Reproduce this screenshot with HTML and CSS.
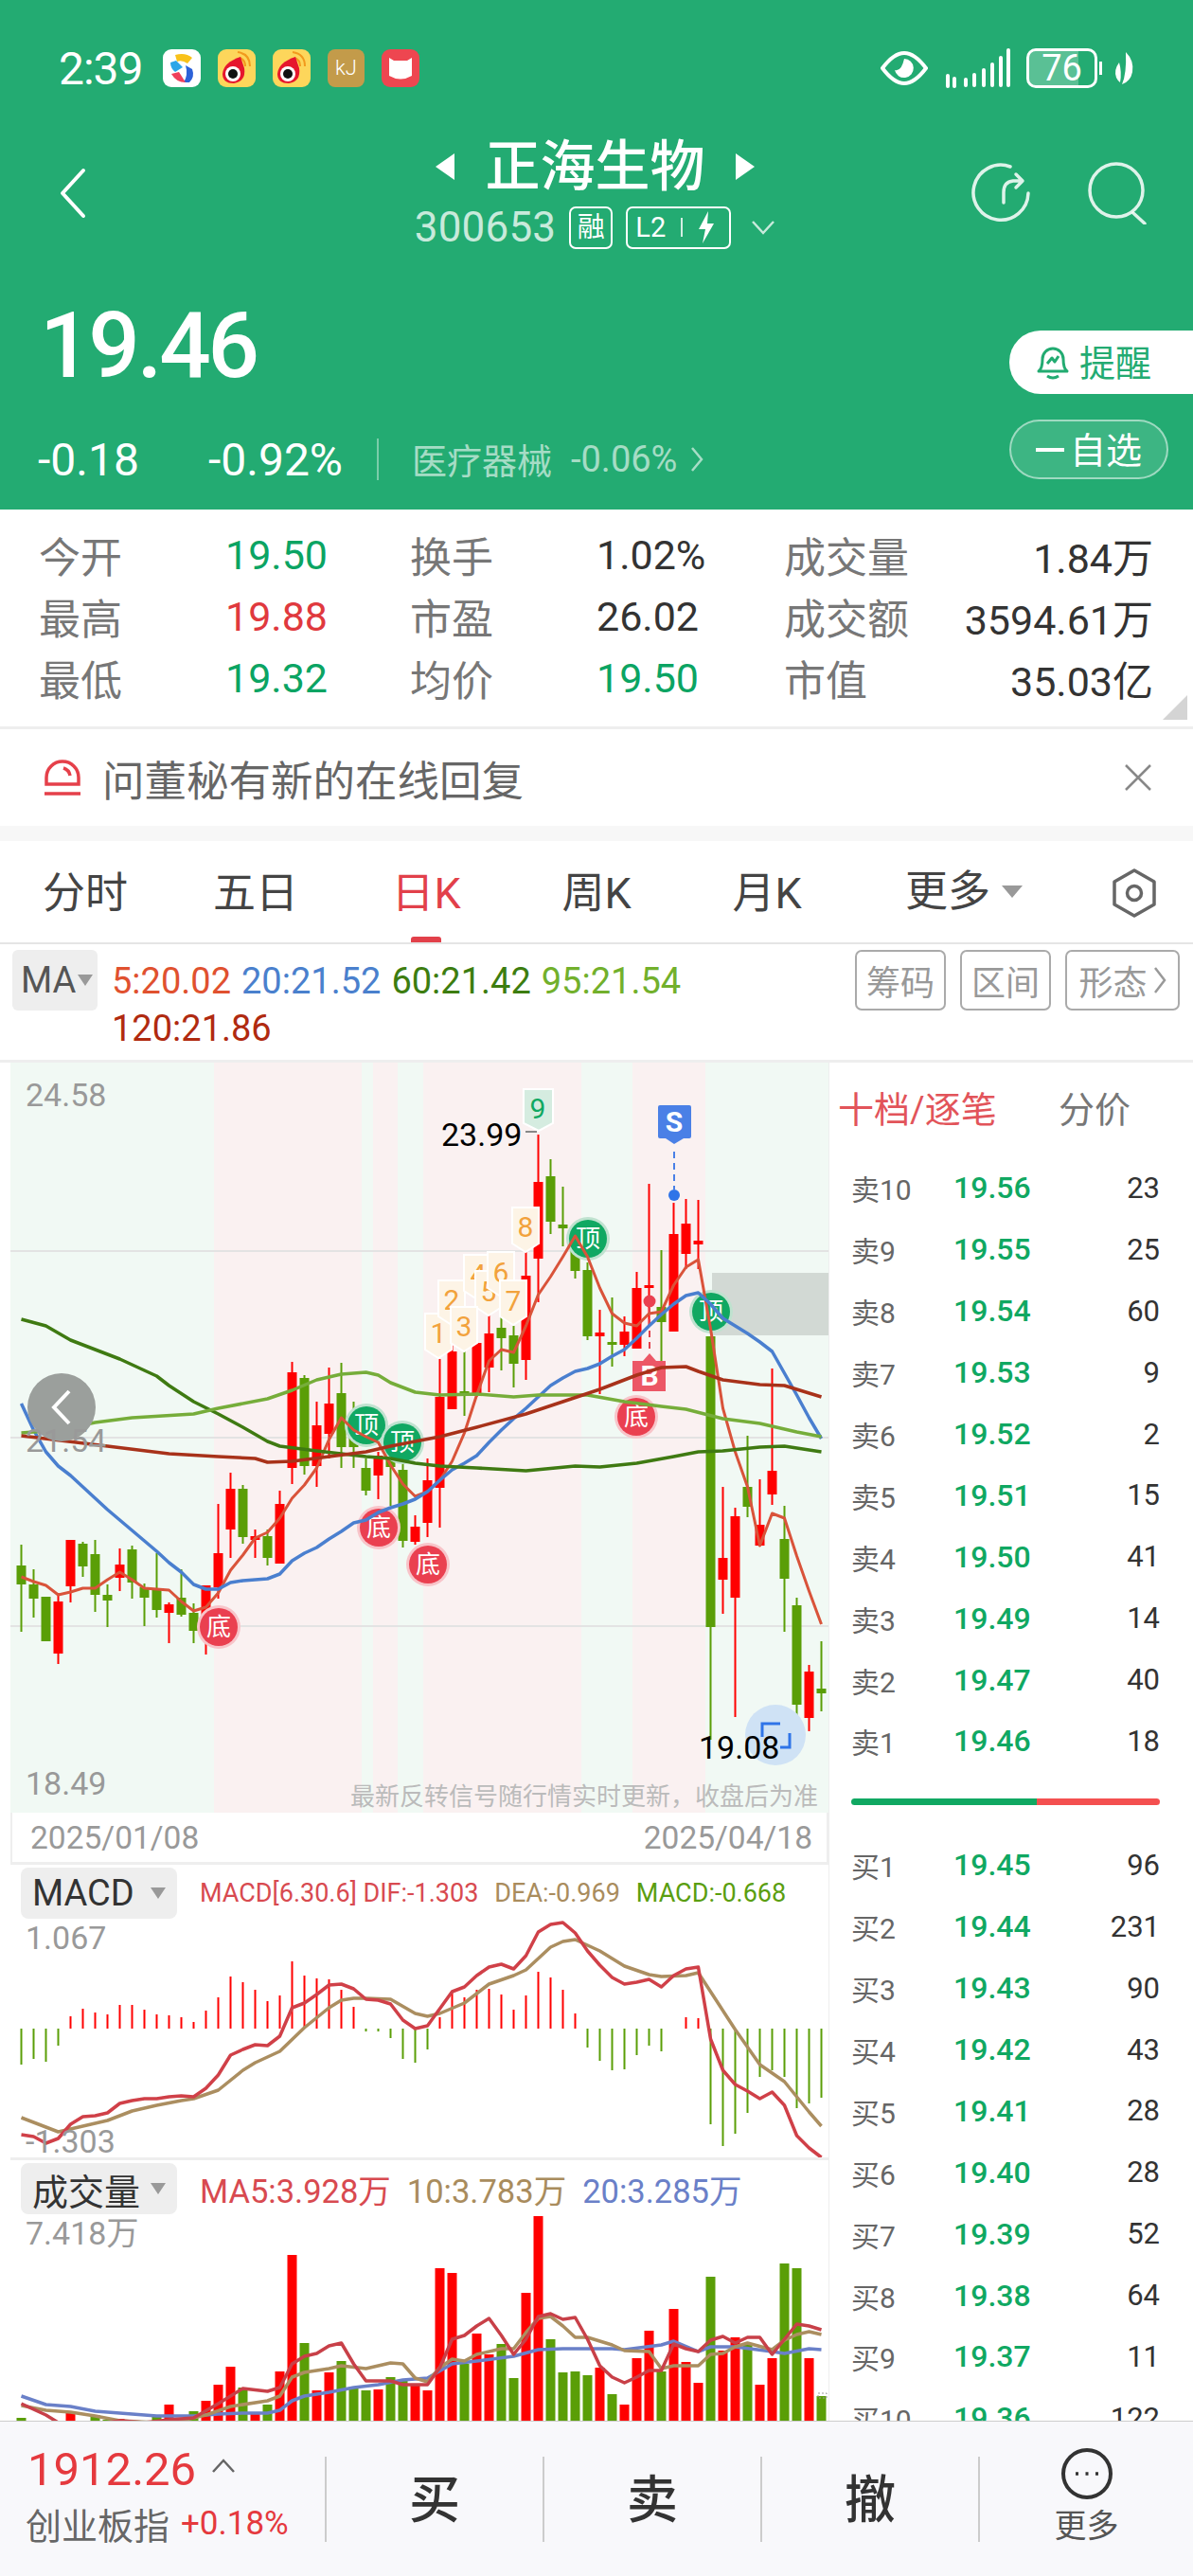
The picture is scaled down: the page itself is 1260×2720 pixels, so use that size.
FILE: index.html
```html
<!DOCTYPE html>
<html lang="zh-CN">

<head>
    <meta charset="UTF-8">
    <meta name="viewport" content="width=device-width, initial-scale=1.0">
    <title>正海生物</title>
    <link rel="stylesheet" href="styles.css">
</head>

<body>
    <div class="page">
        <header class="top">
            <div class="status">
                <div class="status-left">
                    <span class="clock">2:39</span>
                    <svg class="app-icon" viewBox="0 0 40 40">
                        <rect width="40" height="40" rx="9" fill="#fff" />
                        <path d="M13 6 Q24 3 31 9 L26 15 Q20 11 15 13 Z" fill="#f9c21a" />
                        <path d="M8 14 L14 12 L21 19 L13 24 Q8 20 8 14 Z" fill="#2aa6e8" />
                        <path d="M24 17 L31 21 Q34 29 28 35 L22 35 Q27 27 24 17 Z" fill="#2c62d8" />
                        <path d="M9 26 L17 24 L24 35 Q14 35 9 26 Z" fill="#ef3f5a" />
                    </svg>
                    <svg class="app-icon" viewBox="0 0 40 40">
                        <use href="#weibo" />
                    </svg>
                    <svg class="app-icon" viewBox="0 0 40 40">
                        <use href="#weibo" />
                    </svg>
                    <span class="app-kj">kJ</span>
                    <svg class="app-icon" viewBox="0 0 40 40">
                        <rect width="40" height="40" rx="9" fill="#ee4650" />
                        <path d="M8 9 L13 12 H27 L32 9 V28 Q20 35 8 28 Z" fill="#fff" />
                    </svg>
                </div>
                <div class="status-right">
                    <svg class="eye" width="50" height="36" viewBox="0 0 50 36" fill="none" stroke="#fff" stroke-width="4">
                        <path d="M2 18 Q14 2 25 2 Q36 2 48 18 Q36 34 25 34 Q14 34 2 18 Z" />
                        <path d="M25 8 A10 10 0 1 1 15 20 Q22 22 25 8 Z" fill="#fff" stroke="none" />
                    </svg>
                    <svg width="70" height="42" viewBox="0 0 70 42" fill="none" stroke="#fff" stroke-width="4" stroke-linecap="round">
                        <path d="M3 29 V40 M10 32 L10 40 M22 33 V39 M31 28 V39 M41 23 V39 M50 17 V39 M59 10 V39 M67 2 V39" />
                    </svg>
                    <div class="battery"><span class="battery-level"></span><span class="battery-num">76</span></div>
                    <span class="battery-nib"></span>
                    <svg width="24" height="36" viewBox="0 0 24 36">
                        <path d="M15 1 Q24 10 22 22 Q20 32 11 35 Q16 24 15 1 Z M8 12 Q2 20 5 28 Q7 32 9 33 Q11 22 8 12 Z" fill="#fff" />
                    </svg>
                </div>
            </div>

            <div class="nav">
                <svg class="back" width="30" height="54" viewBox="0 0 30 54" fill="none" stroke="#fff" stroke-width="4" stroke-linecap="round" stroke-linejoin="round">
                    <path d="M26 3 L4 27 L26 51" />
                </svg>
                <div class="nav-center">
                    <div class="title-row">
                        <span class="tri-left"></span>
                        <span class="title">正海生物</span>
                        <span class="tri-right"></span>
                    </div>
                    <div class="code-row">
                        <span class="code">300653</span>
                        <span class="badge">融</span>
                        <span class="badge badge-level">L2<i class="badge-line"></i>
                            <svg width="20" height="34" viewBox="0 0 20 34">
                                <path d="M12 0 L2 19 H9 L6 34 L18 13 H11 Z" fill="#fff" />
                            </svg>
                        </span>
                        <svg class="code-more" width="26" height="16" viewBox="0 0 26 16" fill="none" stroke="#fff" stroke-opacity=".75" stroke-width="2.5">
                            <path d="M2 2 L13 14 L24 2" />
                        </svg>
                    </div>
                </div>
                <div class="nav-actions">
                    <svg width="64" height="66" viewBox="0 0 64 66" fill="none" stroke="#fff" stroke-opacity=".85" stroke-width="3.5" stroke-linecap="round" stroke-linejoin="round">
                        <path d="M41 5 A29 29 0 1 0 60 33" />
                        <path d="M34 43 V32 Q34 21 44 20 H54 M47 13 L54 20 L47 27" />
                    </svg>
                    <svg width="64" height="66" viewBox="0 0 64 66" fill="none" stroke="#fff" stroke-opacity=".85" stroke-width="3.5" stroke-linecap="round">
                        <circle cx="31" cy="30" r="28" />
                        <path d="M49 54 L61 65" />
                    </svg>
                </div>
            </div>

            <div class="quote">
                <div>
                    <div class="price">19.46</div>
                    <div class="change-row">
                        <span class="change">-0.18</span>
                        <span class="change change-pct">-0.92%</span>
                        <span class="change-line"></span>
                        <span class="sector">医疗器械</span>
                        <span class="sector-pct">-0.06%</span>
                        <svg width="14" height="28" viewBox="0 0 14 28" fill="none" stroke="#fff" stroke-opacity=".6" stroke-width="2.5">
                            <path d="M2 2 L12 14 L2 26" />
                        </svg>
                    </div>
                </div>
                <div class="quote-buttons">
                    <div class="btn-remind">
                        <svg width="36" height="36" viewBox="0 0 36 36" fill="none" stroke="#22ab71" stroke-width="3" stroke-linejoin="round">
                            <path d="M3 27 Q7 24 7 14 A11 11 0 0 1 29 14 Q29 24 33 27 Z" />
                            <path d="M12 32 Q18 36 24 32 M12 19 L17 13 L20 17 L24 11" />
                        </svg>
                        <span class="btn-text">提醒</span>
                    </div>
                    <div class="btn-watch"><span class="btn-dash"></span><span class="btn-text">自选</span></div>
                </div>
            </div>
        </header>

        <section class="stats">
            <span class="stat-label">今开</span><span class="fall">19.50</span>
            <span class="stat-label">换手</span><span class="stat-value">1.02%</span>
            <span class="stat-label">成交量</span><span class="stat-value stat-end">1.84万</span>
            <span class="stat-label">最高</span><span class="rise">19.88</span>
            <span class="stat-label">市盈</span><span class="stat-value">26.02</span>
            <span class="stat-label">成交额</span><span class="stat-value stat-end">3594.61万</span>
            <span class="stat-label">最低</span><span class="fall">19.32</span>
            <span class="stat-label">均价</span><span class="fall">19.50</span>
            <span class="stat-label">市值</span><span class="stat-value stat-end">35.03亿</span>
            <span class="stats-corner"></span>
        </section>

        <section class="notice">
            <svg width="40" height="40" viewBox="0 0 40 40" fill="none" stroke="#e5404a" stroke-width="3.5">
                <path d="M3 27 V20 A17 17 0 0 1 37 20 V27 Z" />
                <path d="M1 37 H39 M21 10 A10 10 0 0 1 28 18" />
            </svg>
            <span class="notice-text">问董秘有新的在线回复</span>
            <svg width="30" height="30" viewBox="0 0 30 30" fill="none" stroke="#888" stroke-width="2.5">
                <path d="M2 2 L28 28 M28 2 L2 28" />
            </svg>
        </section>

        <nav class="tabs">
            <span class="tab">分时</span>
            <span class="tab">五日</span>
            <span class="tab tab-on">日K</span>
            <span class="tab">周K</span>
            <span class="tab">月K</span>
            <span class="tab tab-more">更多<i class="tri-down"></i></span>
            <svg class="tab-gear" width="48" height="52" viewBox="0 0 48 52" fill="none" stroke="#666" stroke-width="3.5" stroke-linejoin="round">
                <path d="M24 2 L45 14 V38 L24 50 L3 38 V14 Z" />
                <circle cx="24" cy="26" r="7.5" />
            </svg>
        </nav>

        <section class="ma-row">
            <div class="ma-btn">MA<i class="tri-down tri-small"></i></div>
            <div class="ma-legend">
                <span class="ma5">5:20.02</span>
                <span class="ma20">20:21.52</span>
                <span class="ma60">60:21.42</span>
                <span class="ma95">95:21.54</span>
                <span class="ma120">120:21.86</span>
            </div>
            <div class="ma-tools">
                <span class="tool">筹码</span>
                <span class="tool">区间</span>
                <span class="tool tool-wide">形态
                    <svg width="14" height="30" viewBox="0 0 14 30" fill="none" stroke="#999" stroke-width="2.5">
                        <path d="M2 2 L12 15 L2 28" />
                    </svg>
                </span>
            </div>
        </section>

        <main class="workspace">
            <div class="charts">
                <svg class="kline" width="864" height="792" viewBox="11 1122 864 792">
                    <rect x="11" y="1122" width="864" height="792" fill="#f1f9f4" />
                    <rect class="band" x="226" y="1122" width="156" height="792" />
                    <rect class="band" x="394" y="1122" width="26" height="792" />
                    <rect class="band" x="447" y="1122" width="167" height="792" />
                    <rect class="band" x="668" y="1122" width="77" height="792" />
                    <path class="grid-line" d="M11 1321 H875 M11 1518 H875 M11 1717 H875" />
                    <rect x="752" y="1344" width="123" height="66" fill="#d2d9d4" />

                    <g id="candles"></g>

                    <g class="pin pin-orange">
                        <path d="M449 1387 h28 v38 l-14 9 l-14 -9 z" /><text x="463" y="1418">1</text>
                        <path d="M463 1352 h28 v38 l-14 9 l-14 -9 z" /><text x="477" y="1383">2</text>
                        <path d="M490 1325 h28 v38 l-14 9 l-14 -9 z" /><text x="505" y="1356">4</text>
                        <path d="M502 1342 h28 v38 l-14 9 l-14 -9 z" /><text x="516" y="1374">5</text>
                        <path d="M515 1322 h28 v38 l-14 9 l-14 -9 z" /><text x="529" y="1354">6</text>
                        <path d="M528 1352 h28 v38 l-14 9 l-14 -9 z" /><text x="542" y="1384">7</text>
                        <path d="M476 1380 h28 v38 l-14 9 l-14 -9 z" /><text x="490" y="1411">3</text>
                        <path d="M541 1275 h28 v38 l-14 9 l-14 -9 z" /><text x="555" y="1306">8</text>
                    </g>
                    <g class="pin pin-green">
                        <path d="M553 1150 h31 v36 l-15 8 l-16 -8 z" /><text x="568" y="1181">9</text>
                    </g>

                    <path class="tick" d="M555 1195 H567 M830 1841 H841" />

                    <rect x="695" y="1167" width="35" height="35" rx="2" fill="#4a80e6" />
                    <path d="M703 1202 H722 L712 1208 Z" fill="#4a80e6" />
                    <text class="flag-text" x="712" y="1195">S</text>
                    <path class="dash-blue" d="M712 1216 V1256" />
                    <circle cx="712" cy="1262" r="6" fill="#2f74e8" />

                    <circle cx="686" cy="1374" r="6.5" fill="#ea4050" />
                    <path class="dash-red" d="M686 1381 V1425" />
                    <path d="M668 1469 V1437 H679 L686 1429 L693 1437 H703 V1469 Z" fill="#ec5766" />
                    <text class="flag-text" x="686" y="1463">B</text>

                    <g class="sign sign-top">
                        <circle cx="387" cy="1505" r="23" /><circle cx="387" cy="1505" r="20" /><text x="387" y="1514">顶</text>
                        <circle cx="425" cy="1523" r="23" /><circle cx="425" cy="1523" r="20" /><text x="425" y="1532">顶</text>
                        <circle cx="621" cy="1308" r="23" /><circle cx="621" cy="1308" r="20" /><text x="621" y="1317">顶</text>
                        <circle cx="751" cy="1385" r="23" /><circle cx="751" cy="1385" r="20" /><text x="751" y="1394">顶</text>
                    </g>
                    <g class="sign sign-bottom">
                        <circle cx="672" cy="1496" r="23" /><circle cx="672" cy="1496" r="20" /><text x="672" y="1505">底</text>
                        <circle cx="231" cy="1718" r="23" /><circle cx="231" cy="1718" r="20" /><text x="231" y="1727">底</text>
                        <circle cx="400" cy="1613" r="23" /><circle cx="400" cy="1613" r="20" /><text x="400" y="1622">底</text>
                        <circle cx="452" cy="1652" r="23" /><circle cx="452" cy="1652" r="20" /><text x="452" y="1661">底</text>
                    </g>

                    <g id="kline-lines"></g>

                    <circle cx="819" cy="1832" r="32" fill="#cfe2f5" />
                    <path d="M805 1834 V1820 H824 M824 1845 H834 V1830" fill="none" stroke="#2f74e8" stroke-width="3" />

                    <circle cx="65" cy="1486" r="36" fill="#9b9f9c" />
                    <path d="M73 1469 L57 1486 L73 1503" fill="none" stroke="#fff" stroke-width="4" />

                    <text class="axis" x="27" y="1168">24.58</text>
                    <text class="axis" x="27" y="1533">21.54</text>
                    <text class="axis" x="27" y="1895">18.49</text>
                    <text class="hilo" x="466" y="1210">23.99</text>
                    <text class="hilo" x="738" y="1857">19.08</text>
                    <text class="watermark" x="864" y="1906">最新反转信号随行情实时更新，收盘后为准</text>
                </svg>

                <div class="dates"><span>2025/01/08</span><span>2025/04/18</span></div>

                <div class="panel panel-macd">
                    <svg width="864" height="312" viewBox="11 1966 864 312">
                        <g id="macd-plot"></g>
                        <text class="axis" x="27" y="2055">1.067</text>
                        <text class="axis" x="27" y="2270">-1.303</text>
                    </svg>
                    <div class="panel-head">
                        <div class="panel-btn">MACD<i class="tri-down tri-small"></i></div>
                        <span class="lg-red lg-macd">MACD[6.30.6] DIF:-1.303</span>
                        <span class="lg-tan lg-macd">DEA:-0.969</span>
                        <span class="lg-green lg-macd">MACD:-0.668</span>
                    </div>
                </div>

                <div class="panel panel-vol">
                    <svg width="864" height="278" viewBox="11 2278 864 278">
                        <g id="vol-plot"></g>
                        <rect class="vol-mark" x="864" y="2524" width="9" height="5" />
                        <text class="axis" x="27" y="2367">7.418万</text>
                    </svg>
                    <div class="panel-head">
                        <div class="panel-btn">成交量<i class="tri-down tri-small"></i></div>
                        <span class="lg-red">MA5:3.928万</span>
                        <span class="lg-tan">10:3.783万</span>
                        <span class="lg-blue">20:3.285万</span>
                    </div>
                </div>
            </div>

            <aside class="book">
                <div class="book-head"><span class="book-title">十档/逐笔</span><span class="book-sub">分价</span></div>
                <div class="book-row"><span class="side">卖10</span><span class="bid">19.56</span><span class="qty">23</span></div>
                <div class="book-row"><span class="side">卖9</span><span class="bid">19.55</span><span class="qty">25</span></div>
                <div class="book-row"><span class="side">卖8</span><span class="bid">19.54</span><span class="qty">60</span></div>
                <div class="book-row"><span class="side">卖7</span><span class="bid">19.53</span><span class="qty">9</span></div>
                <div class="book-row"><span class="side">卖6</span><span class="bid">19.52</span><span class="qty">2</span></div>
                <div class="book-row"><span class="side">卖5</span><span class="bid">19.51</span><span class="qty">15</span></div>
                <div class="book-row"><span class="side">卖4</span><span class="bid">19.50</span><span class="qty">41</span></div>
                <div class="book-row"><span class="side">卖3</span><span class="bid">19.49</span><span class="qty">14</span></div>
                <div class="book-row"><span class="side">卖2</span><span class="bid">19.47</span><span class="qty">40</span></div>
                <div class="book-row"><span class="side">卖1</span><span class="bid">19.46</span><span class="qty">18</span></div>
                <div class="book-bar"><span class="bar-buy"></span><span class="bar-sell"></span></div>
                <div class="book-row"><span class="side">买1</span><span class="bid">19.45</span><span class="qty">96</span></div>
                <div class="book-row"><span class="side">买2</span><span class="bid">19.44</span><span class="qty">231</span></div>
                <div class="book-row"><span class="side">买3</span><span class="bid">19.43</span><span class="qty">90</span></div>
                <div class="book-row"><span class="side">买4</span><span class="bid">19.42</span><span class="qty">43</span></div>
                <div class="book-row"><span class="side">买5</span><span class="bid">19.41</span><span class="qty">28</span></div>
                <div class="book-row"><span class="side">买6</span><span class="bid">19.40</span><span class="qty">28</span></div>
                <div class="book-row"><span class="side">买7</span><span class="bid">19.39</span><span class="qty">52</span></div>
                <div class="book-row"><span class="side">买8</span><span class="bid">19.38</span><span class="qty">64</span></div>
                <div class="book-row"><span class="side">买9</span><span class="bid">19.37</span><span class="qty">11</span></div>
                <div class="book-row"><span class="side">买10</span><span class="bid">19.36</span><span class="qty">122</span></div>
            </aside>
        </main>

        <footer class="bottom">
            <div class="index">
                <div class="index-top">
                    <span class="index-num">1912.26</span>
                    <svg width="26" height="16" viewBox="0 0 26 16" fill="none" stroke="#666" stroke-width="2.5">
                        <path d="M2 14 L13 2 L24 14" />
                    </svg>
                </div>
                <div class="index-sub"><span class="index-name">创业板指</span><span class="index-pct">+0.18%</span></div>
            </div>
            <div class="action">买</div>
            <div class="action">卖</div>
            <div class="action">撤</div>
            <div class="action action-more">
                <svg width="56" height="56" viewBox="0 0 56 56" fill="none" stroke="#333" stroke-width="4">
                    <circle cx="28" cy="28" r="25" />
                    <path d="M16 28 H19 M26.5 28 H29.5 M37 28 H40" stroke-width="3.5" />
                </svg>
                <span class="more-text">更多</span>
            </div>
        </footer>
    </div>

    <svg width="0" height="0" class="defs">
        <defs>
            <g id="weibo">
                <rect width="40" height="40" rx="9" fill="#fdd65b" />
                <path d="M21 3 Q34 5 34 18 M23 9 Q29 11 29 18" fill="none" stroke="#f29a1d" stroke-width="2" />
                <path d="M24 8 Q26 14 28 20 Q30 34 17 36 Q5 36 5 26 Q6 14 24 8 Z" fill="#e6162d" />
                <circle cx="16" cy="26" r="8" fill="#fff" />
                <circle cx="16" cy="26" r="5" fill="#111" />
            </g>
        </defs>
    </svg>

    <script src="chart.js"></script>
</body>

</html>
```

FILE: styles.css
```css
* {
    box-sizing: border-box;
}

body {
    margin: 0;
    font-family: Roboto, "Noto Sans CJK SC", sans-serif;
    background-color: #fff;
    color: #333;
}

i {
    font-style: normal;
}

.defs {
    position: absolute;
    width: 0;
    height: 0;
}

.page {
    width: 1260px;
    height: 2720px;
    display: flex;
    flex-direction: column;
    overflow: hidden;
}

/* green header */
.top {
    height: 538px;
    flex-shrink: 0;
    background-color: #23ab72;
    color: #fff;
}

.status {
    height: 144px;
    padding: 0 62px 0 62px;
    display: flex;
    align-items: center;
    justify-content: space-between;
}

.status-left,
.status-right {
    display: flex;
    align-items: center;
}

.status-left {
    gap: 18px;
}

.clock {
    font-size: 48px;
    width: 92px;
    letter-spacing: -1px;
}

.app-icon {
    width: 40px;
    height: 40px;
}

.app-kj {
    width: 39px;
    height: 40px;
    border-radius: 8px;
    background-color: #c39b4a;
    font-size: 22px;
    line-height: 40px;
    text-align: center;
    font-weight: 300;
}

.eye {
    margin-right: 18px;
}

.battery {
    position: relative;
    width: 75px;
    height: 42px;
    margin-left: 16px;
    border: 3px solid #fff;
    border-radius: 10px;
    overflow: hidden;
}

.battery-level {
    display: block;
    width: 76%;
    height: 100%;
    background-color: rgba(255, 255, 255, 0.25);
}

.battery-num {
    position: absolute;
    left: 0;
    right: 0;
    top: -6px;
    text-align: center;
    font-size: 38px;
    line-height: 48px;
}

.battery-nib {
    width: 3px;
    height: 14px;
    margin: 0 10px 0 2px;
    background-color: #fff;
}

.nav {
    height: 120px;
    padding: 0 48px 0 62px;
    display: grid;
    grid-template-columns: 1fr auto 1fr;
    align-items: center;
}

.nav-center {
    padding-right: 17px;
}

.title-row {
    height: 64px;
    display: flex;
    align-items: center;
    justify-content: center;
    gap: 32px;
}

.title {
    font-size: 58px;
    line-height: 64px;
    font-weight: 500;
}

.tri-left,
.tri-right {
    width: 0;
    height: 0;
    border-top: 14px solid transparent;
    border-bottom: 14px solid transparent;
}

.tri-left {
    border-right: 20px solid #fff;
}

.tri-right {
    border-left: 20px solid #fff;
}

.code-row {
    height: 48px;
    margin-top: 8px;
    display: flex;
    align-items: center;
    gap: 14px;
}

.code {
    font-size: 44px;
    letter-spacing: 0.2px;
    color: rgba(255, 255, 255, 0.75);
}

.badge {
    height: 45px;
    width: 46px;
    border: 2px solid #fff;
    border-radius: 7px;
    font-size: 29px;
    line-height: 40px;
    text-align: center;
}

.badge-level {
    width: 111px;
    display: flex;
    align-items: center;
    justify-content: space-between;
    padding: 0 14px 0 8px;
}

.badge-line {
    width: 2px;
    height: 20px;
    background-color: #fff;
    opacity: 0.8;
}

.code-more {
    margin-left: 7px;
}

.nav-actions {
    display: flex;
    justify-content: flex-end;
    gap: 58px;
}

.quote {
    display: flex;
    justify-content: space-between;
    height: 274px;
}

.price {
    margin: 51px 0 0 42px;
    font-size: 96px;
    line-height: 100px;
    letter-spacing: -3.2px;
    font-weight: 500;
}

.change-row {
    margin: 45px 0 0 40px;
    height: 50px;
    display: flex;
    align-items: center;
}

.change {
    font-size: 48px;
    width: 180px;
}

.change-pct {
    width: 178px;
}

.change-line {
    width: 2px;
    height: 44px;
    background-color: rgba(255, 255, 255, 0.4);
    margin-right: 35px;
}

.sector {
    font-size: 37px;
    color: rgba(255, 255, 255, 0.6);
    margin-right: 20px;
}

.sector-pct {
    font-size: 38px;
    color: rgba(255, 255, 255, 0.6);
    margin-right: 14px;
}

.quote-buttons {
    display: flex;
    flex-direction: column;
    align-items: flex-end;
}

.btn-remind {
    margin-top: 85px;
    width: 194px;
    height: 67px;
    background-color: #fff;
    border-radius: 33px 0 0 33px;
    color: #23ab72;
    font-size: 38px;
    padding-left: 28px;
    display: flex;
    align-items: center;
    gap: 10px;
}

.btn-watch {
    margin: 27px 26px 0 0;
    width: 168px;
    height: 63px;
    border: 2px solid rgba(255, 255, 255, 0.5);
    background-color: rgba(255, 255, 255, 0.12);
    border-radius: 32px;
    font-size: 38px;
    display: flex;
    align-items: center;
    justify-content: center;
    gap: 6px;
}

.btn-text {
    margin-top: -5px;
}

.btn-dash {
    width: 30px;
    height: 4px;
    background-color: #fff;
}

/* quote numbers */
.stats {
    position: relative;
    height: 232px;
    flex-shrink: 0;
    padding: 15px 42px 0 41px;
    display: grid;
    grid-template-columns: 197px 195px 197px 198px auto 1fr;
    grid-auto-rows: 65px;
    align-items: center;
    font-size: 43px;
    border-bottom: 3px solid #eee;
}

.stat-label {
    font-size: 44px;
    color: #777;
}

.stat-value {
    color: #333;
}

.stat-end {
    text-align: right;
}

.rise {
    color: #e0393e;
}

.fall {
    color: #0ba463;
}

.stats-corner {
    position: absolute;
    right: 6px;
    bottom: 7px;
    width: 0;
    height: 0;
    border-left: 26px solid transparent;
    border-bottom: 26px solid #d4d4d4;
}

.notice {
    height: 118px;
    flex-shrink: 0;
    padding: 0 43px 0 46px;
    display: flex;
    align-items: center;
    border-bottom: 16px solid #f7f7f7;
}

.notice-text {
    flex: 1;
    margin-left: 22px;
    font-size: 44.5px;
    color: #666;
}

.tabs {
    height: 109px;
    flex-shrink: 0;
    display: grid;
    grid-template-columns: repeat(6, 180px) 1fr;
    align-items: center;
    border-bottom: 2px solid #e5e5e5;
}

.tab {
    position: relative;
    height: 107px;
    line-height: 111px;
    text-align: center;
    font-size: 45px;
    color: #444;
}

.tab-on {
    color: #e2404a;
}

.tab-on::after {
    content: "";
    position: absolute;
    left: 74px;
    bottom: 0;
    width: 32px;
    height: 6px;
    border-radius: 3px 3px 0 0;
    background-color: #e2404a;
}

.tab-more {
    display: flex;
    align-items: center;
    padding-left: 56px;
    gap: 12px;
    white-space: nowrap;
}

.tri-down {
    display: inline-block;
    width: 0;
    height: 0;
    flex-shrink: 0;
    border-left: 11px solid transparent;
    border-right: 11px solid transparent;
    border-top: 13px solid #999;
}

.tri-small {
    border-left-width: 8px;
    border-right-width: 8px;
    border-top-width: 12px;
}

.tab-gear {
    justify-self: end;
    margin: 2px 38px 0 0;
}

.ma-row {
    height: 125px;
    flex-shrink: 0;
    padding: 6px 14px 0 13px;
    display: flex;
    align-items: flex-start;
    border-bottom: 3px solid #eee;
}

.ma-btn {
    width: 90px;
    height: 64px;
    border-radius: 6px;
    background-color: #eee;
    color: #555;
    font-size: 38px;
    padding-left: 9px;
    display: flex;
    align-items: center;
    gap: 2px;
}

.ma-legend {
    width: 640px;
    margin: 8px 0 0 15px;
    display: flex;
    flex-wrap: wrap;
    column-gap: 11px;
    font-size: 38px;
    line-height: 50px;
}

.ma5 { color: #e0512f; }
.ma20 { color: #4a80cd; }
.ma60 { color: #3d7d10; }
.ma95 { color: #72b02c; }
.ma120 { color: #b02a10; }

.ma-tools {
    margin-left: auto;
    display: flex;
    gap: 15px;
}

.tool {
    width: 96px;
    height: 64px;
    border: 2px solid #aaa;
    border-radius: 7px;
    color: #999;
    font-size: 36px;
    display: flex;
    align-items: center;
    justify-content: center;
    gap: 6px;
}

.tool-wide {
    width: 121px;
}

/* charts and order book */
.workspace {
    height: 1434px;
    flex-shrink: 0;
    display: flex;
    overflow: hidden;
}

.charts {
    width: 875px;
    padding-left: 11px;
    flex-shrink: 0;
}

.charts svg {
    display: block;
}

.band {
    fill: #faf1f1;
}

.grid-line {
    stroke: #e3e3e3;
    stroke-width: 2;
    fill: none;
}

.pin path {
    stroke: #fff;
    stroke-width: 2;
}

.pin text {
    font-size: 30px;
    text-anchor: middle;
}

.pin-orange path {
    fill: #fdf4e6;
}

.pin-orange text {
    fill: #f2a23c;
}

.pin-green path {
    fill: #d5ece0;
}

.pin-green text {
    fill: #10a862;
}

.tick {
    stroke: #888;
    stroke-width: 2;
}

.flag-text {
    font-size: 30px;
    font-weight: 700;
    fill: #fff;
    text-anchor: middle;
}

.dash-blue,
.dash-red {
    stroke-width: 2;
    stroke-dasharray: 7 5;
}

.dash-blue {
    stroke: #4a80e6;
}

.dash-red {
    stroke: #e2404a;
}

.sign text {
    fill: #fff;
    font-size: 26px;
    text-anchor: middle;
}

.sign-top circle {
    fill: #10a862;
}

.sign-top circle:nth-of-type(odd) {
    fill: #bfe2cf;
}

.sign-bottom circle {
    fill: #ea4050;
}

.sign-bottom circle:nth-of-type(odd) {
    fill: #f8c4c9;
}

.axis {
    font-size: 34px;
    fill: #999;
}

.hilo {
    font-size: 34px;
    fill: #000;
}

.watermark {
    font-size: 26px;
    fill: #bbb;
    text-anchor: end;
}

.vol-mark {
    fill: none;
    stroke: #999;
    stroke-width: 1;
    stroke-dasharray: 2 2;
}

.candle-up {
    stroke: #f00;
    fill: #f00;
    stroke-width: 2;
}

.candle-down {
    stroke: #5a9e07;
    fill: #5a9e07;
    stroke-width: 2;
}

.line {
    fill: none;
    stroke-linejoin: round;
    stroke-width: 3;
}

.line-thick {
    stroke-width: 3.5;
}

.dates {
    height: 52px;
    padding: 0 15px 0 19px;
    display: flex;
    justify-content: space-between;
    align-items: center;
    font-size: 33.5px;
    color: #999;
    border-left: 2px solid #eee;
    border-right: 2px solid #eee;
}

.panel {
    position: relative;
    border-top: 3px solid #eee;
}

.panel-macd {
    height: 312px;
}

.panel-vol {
    height: 278px;
}

.panel svg {
    position: absolute;
    left: 0;
    top: 0;
}

.panel-head {
    position: absolute;
    left: 11px;
    top: 3px;
    height: 54px;
    display: flex;
    align-items: center;
    gap: 17px;
    font-size: 34.5px;
}

.panel-btn {
    width: 165px;
    height: 54px;
    margin-right: 7px;
    border-radius: 8px;
    background-color: #eee;
    color: #333;
    font-size: 38px;
    display: flex;
    align-items: center;
    justify-content: space-between;
    padding: 0 12px 0 12px;
}

.lg-red { color: #d84a50; }
.lg-tan { color: #a98c5d; }
.lg-green { color: #5a9e10; }
.lg-blue { color: #6a80c8; }

.lg-macd {
    font-size: 27px;
}

.book {
    flex: 1;
    padding: 0 35px 0 23px;
    border-left: 1px solid #eee;
    overflow: hidden;
}

.book-head {
    height: 100px;
    padding-top: 28px;
    margin-left: -14px;
    display: flex;
    line-height: 44px;
    font-size: 38px;
}

.book-title {
    width: 233px;
    color: #e2545a;
}

.book-sub {
    color: #777;
}

.book-row {
    height: 64.9px;
    display: grid;
    grid-template-columns: 108px 1fr auto;
    align-items: center;
}

.side {
    font-size: 30px;
    color: #666;
}

.bid {
    font-size: 32px;
    font-weight: 500;
    color: #10a862;
}

.qty {
    font-size: 31px;
    color: #333;
}

.book-bar {
    height: 7px;
    margin: 28px 0 31px 0;
    display: flex;
    border-radius: 4px;
    overflow: hidden;
}

.bar-buy {
    width: 196px;
    background-color: #10a862;
}

.bar-sell {
    flex: 1;
    background-color: #f45050;
}

.bottom {
    flex: 1;
    display: flex;
    align-items: flex-start;
    padding-top: 37px;
    background-color: #f8f8fb;
    border-top: 1px solid #ccc;
}

.index {
    width: 343px;
    padding-left: 29px;
}

.index-top {
    height: 42px;
    margin-top: -8px;
    display: flex;
    align-items: center;
    gap: 16px;
}

.index-num {
    font-size: 49px;
    color: #e5393e;
}

.index-top svg {
    margin-bottom: 6px;
}

.index-sub {
    margin: 9px 0 0 -2px;
    display: flex;
    align-items: center;
    gap: 12px;
}

.index-name {
    font-size: 38px;
    color: #666;
}

.index-pct {
    font-size: 35px;
    color: #e5393e;
}

.action {
    width: 230px;
    height: 90px;
    border-left: 2px solid #ccc;
    text-align: center;
    font-size: 54px;
    line-height: 94px;
    font-weight: 500;
    color: #333;
}

.action-more {
    width: 227px;
    display: flex;
    flex-direction: column;
    align-items: center;
    line-height: 1;
}

.action-more svg {
    margin-top: -10px;
    flex-shrink: 0;
}

.more-text {
    margin-top: 10px;
    font-size: 34px;
    font-weight: 400;
    color: #555;
}
```

FILE: chart.js
```js
const X0 = 22.5;
const STEP = 13;

// wick top, body top, body bottom, wick bottom, 1 = up
const candles = [
    [1631, 1654, 1672, 1723, 0], [1657, 1674, 1687, 1708, 0], [1687, 1687, 1732, 1733, 0], [1682, 1692, 1745, 1757, 1],
    [1627, 1627, 1674, 1692, 1], [1628, 1631, 1653, 1665, 0], [1626, 1642, 1683, 1702, 0], [1673, 1685, 1689, 1718, 0],
    [1635, 1653, 1665, 1680, 1], [1632, 1637, 1670, 1688, 0], [1672, 1677, 1686, 1717, 0], [1640, 1679, 1699, 1708, 0],
    [1692, 1695, 1702, 1735, 1], [1657, 1688, 1704, 1707, 0], [1693, 1704, 1721, 1735, 0], [1675, 1675, 1720, 1747, 1],
    [1588, 1641, 1675, 1688, 1], [1555, 1573, 1614, 1645, 1], [1568, 1573, 1622, 1630, 0], [1615, 1623, 1625, 1645, 1],
    [1615, 1623, 1644, 1653, 0], [1574, 1589, 1650, 1651, 1], [1438, 1450, 1549, 1567, 1], [1452, 1456, 1547, 1557, 0],
    [1480, 1506, 1547, 1570, 1], [1444, 1483, 1513, 1540, 1], [1439, 1472, 1527, 1550, 0], [1480, 1497, 1527, 1550, 0],
    [1540, 1551, 1573, 1579, 0], [1533, 1538, 1557, 1583, 1], [1530, 1542, 1548, 1590, 0], [1540, 1553, 1626, 1634, 0],
    [1600, 1613, 1627, 1631, 1], [1540, 1564, 1607, 1623, 1], [1435, 1476, 1570, 1613, 1], [1400, 1428, 1487, 1487, 1],
    [1427, 1470, 1472, 1495, 0], [1372, 1419, 1473, 1475, 1], [1387, 1409, 1443, 1470, 1], [1373, 1403, 1412, 1447, 0],
    [1400, 1411, 1439, 1465, 0], [1322, 1348, 1435, 1457, 1], [1198, 1249, 1328, 1375, 1], [1224, 1243, 1289, 1303, 0],
    [1253, 1294, 1296, 1316, 0], [1303, 1313, 1341, 1350, 0], [1333, 1342, 1410, 1415, 0], [1383, 1408, 1410, 1472, 1],
    [1370, 1418, 1419, 1443, 0], [1390, 1407, 1419, 1432, 1], [1343, 1361, 1423, 1423, 1], [1250, 1358, 1359, 1400, 1],
    [1320, 1381, 1395, 1438, 0], [1270, 1304, 1405, 1405, 1], [1266, 1293, 1323, 1340, 1], [1267, 1311, 1313, 1340, 1],
    [1412, 1412, 1717, 1837, 0], [1570, 1646, 1667, 1704, 1], [1592, 1602, 1686, 1813, 1], [1516, 1571, 1590, 1602, 0],
    [1562, 1611, 1631, 1633, 1], [1445, 1554, 1577, 1589, 1], [1590, 1626, 1666, 1723, 0], [1687, 1696, 1799, 1838, 0],
    [1758, 1766, 1813, 1828, 1], [1733, 1784, 1787, 1807, 0]
];

const klineLines = [
    {
        color: '#d9533a',
        points: [[0, 1665], [1, 1670], [2, 1674], [3, 1684], [4, 1681], [5, 1677], [6, 1677], [7, 1668], [8, 1660], [9, 1668],
            [10, 1677], [11, 1678], [12, 1679], [13, 1691], [14, 1701], [15, 1697], [16, 1682], [17, 1658], [18, 1642], [19, 1624],
            [20, 1618], [21, 1603], [22, 1582], [23, 1568], [24, 1550], [25, 1520], [26, 1497], [27, 1510], [28, 1517], [29, 1523],
            [30, 1547], [31, 1567], [32, 1580], [33, 1575], [34, 1563], [35, 1543], [36, 1513], [37, 1473], [38, 1437], [39, 1425],
            [40, 1428], [41, 1400], [42, 1367], [43, 1348], [44, 1327], [45, 1305], [46, 1327], [47, 1360], [48, 1387], [49, 1397],
            [50, 1400], [51, 1387], [52, 1385], [53, 1357], [54, 1338], [55, 1330], [56, 1403], [57, 1487], [58, 1533], [59, 1570],
            [60, 1632], [61, 1598], [62, 1603], [63, 1643], [64, 1680], [65, 1715]]
    },
    {
        color: '#4a7fcf',
        thick: true,
        points: [[0, 1482], [1, 1510], [2, 1533], [3, 1548], [4, 1558], [5, 1570], [6, 1582], [7, 1594], [8, 1605], [9, 1616],
            [10, 1627], [11, 1638], [12, 1650], [13, 1660], [14, 1673], [15, 1678], [16, 1678], [17, 1671], [18, 1669], [19, 1668],
            [20, 1667], [21, 1662], [22, 1648], [23, 1640], [24, 1634], [25, 1625], [26, 1617], [27, 1608], [28, 1605], [29, 1597],
            [30, 1592], [31, 1588], [32, 1583], [33, 1575], [34, 1563], [35, 1552], [36, 1545], [37, 1537], [38, 1523], [39, 1510],
            [40, 1498], [41, 1487], [42, 1475], [43, 1463], [44, 1455], [45, 1448], [46, 1445], [47, 1440], [48, 1432], [49, 1425],
            [50, 1413], [51, 1400], [52, 1388], [53, 1377], [54, 1368], [55, 1365], [56, 1377], [57, 1392], [58, 1400], [59, 1408],
            [60, 1417], [61, 1427], [62, 1450], [63, 1473], [64, 1497], [65, 1519]]
    },
    {
        color: '#3f7a12',
        thick: true,
        points: [[0, 1393], [2, 1400], [4, 1415], [6, 1425], [8, 1435], [10, 1447], [11, 1453], [12, 1463], [14, 1480], [16, 1493],
            [18, 1507], [20, 1522], [21, 1527], [24, 1532], [26, 1535], [28, 1538], [30, 1540], [32, 1545], [34, 1548], [37, 1550],
            [41, 1553], [45, 1548], [47, 1549], [50, 1545], [53, 1538], [55, 1533], [57, 1532], [60, 1528], [62, 1527], [65, 1533]]
    },
    {
        color: '#76ad3a',
        thick: true,
        points: [[0, 1513], [3, 1510], [6, 1502], [9, 1497], [14, 1493], [16, 1487], [20, 1477], [22, 1468], [24, 1457], [26, 1451],
            [28, 1449], [29, 1452], [30, 1460], [32, 1470], [34, 1473], [37, 1472], [40, 1475], [42, 1473], [46, 1473], [49, 1480],
            [52, 1485], [54, 1488], [57, 1498], [60, 1503], [63, 1512], [65, 1517]]
    },
    {
        color: '#a8321a',
        thick: true,
        points: [[0, 1516], [7, 1527], [12, 1535], [16, 1538], [19, 1540], [20, 1544], [22, 1543], [25, 1538], [28, 1533], [30, 1527],
            [34, 1517], [37, 1507], [41, 1493], [44, 1480], [47, 1467], [50, 1452], [52, 1444], [54, 1443], [55, 1448], [57, 1457],
            [60, 1462], [62, 1463], [65, 1475]]
    }
];

const macdBars = [2177, 2171, 2174, 2157, 2126, 2118, 2122, 2124, 2114, 2114, 2119, 2124, 2125, 2127, 2132, 2120, 2106, 2084, 2090,
    2098, 2110, 2104, 2068, 2083, 2086, 2087, 2098, 2116, 2142, 2142, 2149, 2171, 2175, 2161, 2127, 2100, 2106, 2098, 2097, 2103,
    2119, 2104, 2079, 2085, 2098, 2123, 2159, 2173, 2183, 2182, 2167, 2157, 2163, 2139, 2127, 2128, 2240, 2263, 2250, 2228, 2190,
    2183, 2190, 2223, 2218, 2212];
const MACD_ZERO = 2139;

const macdLines = [
    {
        color: '#ab8e60',
        thick: true,
        points: [[0, 2233], [2, 2243], [3, 2248], [4, 2245], [7, 2236], [9, 2226], [11, 2220], [13, 2215], [14, 2213], [16, 2204],
            [18, 2183], [19, 2175], [21, 2163], [23, 2138], [25, 2117], [26, 2109], [27, 2107], [28, 2107], [30, 2108], [32, 2123],
            [33, 2126], [34, 2123], [36, 2112], [38, 2092], [40, 2083], [41, 2077], [43, 2053], [44, 2047], [45, 2045], [47, 2057],
            [49, 2073], [51, 2082], [52, 2084], [54, 2083], [55, 2080], [58, 2140], [60, 2177], [62, 2195], [64, 2227], [65, 2242]]
    },
    {
        color: '#d04048',
        thick: true,
        points: [[0, 2251], [1, 2253], [2, 2260], [3, 2255], [4, 2240], [5, 2232], [6, 2231], [7, 2228], [8, 2218], [9, 2215],
            [10, 2213], [11, 2213], [12, 2211], [13, 2210], [14, 2211], [15, 2202], [16, 2188], [17, 2167], [18, 2161], [19, 2156],
            [20, 2157], [21, 2147], [22, 2117], [23, 2112], [24, 2103], [25, 2093], [26, 2092], [27, 2097], [28, 2108], [29, 2109],
            [30, 2113], [31, 2130], [32, 2139], [33, 2136], [34, 2118], [35, 2100], [36, 2095], [37, 2083], [38, 2074], [39, 2071],
            [40, 2076], [41, 2062], [42, 2037], [43, 2029], [44, 2027], [45, 2038], [46, 2057], [47, 2072], [48, 2085], [49, 2092],
            [50, 2090], [51, 2087], [52, 2095], [53, 2083], [54, 2076], [55, 2074], [56, 2150], [57, 2183], [58, 2198], [59, 2205],
            [60, 2213], [61, 2206], [62, 2220], [63, 2252], [64, 2265], [65, 2275]]
    }
];

const VOL_BASE = 2556;
// top of each volume bar, same colour as the candle above it
const volBars = [2551, 2555, 2555, 2554, 2546, 2555, 2548, 2553, 2552, 2554, 2555, 2548, 2537, 2555, 2544, 2533, 2516, 2497, 2519,
    2547, 2537, 2502, 2379, 2472, 2522, 2503, 2491, 2520, 2522, 2521, 2508, 2512, 2515, 2522, 2393, 2398, 2494, 2462, 2484, 2473,
    2509, 2419, 2338, 2468, 2503, 2502, 2506, 2498, 2526, 2537, 2488, 2459, 2502, 2436, 2492, 2514, 2402, 2480, 2466, 2472, 2516,
    2488, 2388, 2393, 2488, 2528];

const volLines = [
    {
        color: '#6a80c8',
        thick: true,
        points: [[0, 2527], [2, 2536], [4, 2538], [6, 2543], [9, 2546], [11, 2548], [14, 2548], [16, 2546], [18, 2545], [20, 2545],
            [21, 2542], [22, 2532], [23, 2527], [25, 2523], [27, 2518], [29, 2515], [31, 2510], [33, 2508], [35, 2493], [37, 2490],
            [40, 2485], [42, 2478], [44, 2477], [48, 2477], [49, 2478], [52, 2473], [53, 2469], [55, 2480], [56, 2475], [58, 2475],
            [61, 2480], [62, 2482], [64, 2477], [65, 2478]]
    },
    {
        color: '#ab8e60',
        thick: true,
        points: [[0, 2537], [2, 2542], [4, 2544], [6, 2548], [8, 2553], [11, 2555], [13, 2553], [15, 2547], [17, 2538], [20, 2532],
            [21, 2527], [22, 2507], [23, 2502], [25, 2498], [26, 2495], [28, 2498], [30, 2492], [31, 2493], [32, 2508], [33, 2512],
            [34, 2497], [35, 2488], [36, 2490], [37, 2483], [39, 2477], [40, 2477], [41, 2460], [42, 2445], [43, 2443], [44, 2453],
            [45, 2465], [46, 2465], [48, 2473], [49, 2479], [51, 2480], [52, 2498], [53, 2495], [55, 2495], [56, 2483], [57, 2482],
            [58, 2475], [59, 2471], [61, 2478], [62, 2468], [63, 2462], [64, 2459], [65, 2462]]
    },
    {
        color: '#c84048',
        thick: true,
        points: [[0, 2535], [2, 2547], [3, 2555], [7, 2555], [8, 2553], [10, 2555], [12, 2552], [14, 2550], [16, 2535], [18, 2519],
            [20, 2522], [21, 2518], [22, 2493], [23, 2485], [24, 2482], [25, 2474], [26, 2471], [27, 2493], [28, 2511], [30, 2511],
            [31, 2515], [33, 2515], [34, 2497], [35, 2467], [36, 2463], [37, 2453], [38, 2445], [39, 2463], [40, 2483], [41, 2467],
            [42, 2443], [43, 2440], [44, 2446], [45, 2444], [46, 2467], [47, 2495], [48, 2507], [49, 2513], [50, 2507], [51, 2500],
            [52, 2500], [53, 2472], [54, 2477], [55, 2480], [56, 2468], [57, 2464], [58, 2471], [59, 2465], [60, 2465], [61, 2483],
            [62, 2467], [63, 2451], [64, 2453], [65, 2457]]
    }
];

function xAt(i) {
    return (X0 + STEP * i).toFixed(1);
}

function lineMarkup(line) {
    const pts = line.points.map(p => xAt(p[0]) + ',' + p[1]).join(' ');
    const cls = line.thick ? 'line line-thick' : 'line';
    return `<polyline class="${cls}" stroke="${line.color}" points="${pts}"/>`;
}

function drawCandles() {
    let html = '';
    candles.forEach((c, i) => {
        const x = xAt(i);
        const cls = c[4] ? 'candle-up' : 'candle-down';
        html += `<path class="${cls}" d="M${x} ${c[0]} V${c[3]}"/>`;
        html += `<rect class="${cls}" x="${x - 4}" y="${c[1]}" width="8" height="${c[2] - c[1]}"/>`;
    });
    document.getElementById('candles').innerHTML = html;
    document.getElementById('kline-lines').innerHTML = klineLines.map(lineMarkup).join('');
}

function drawMacd() {
    let html = '';
    macdBars.forEach((y, i) => {
        if (y === MACD_ZERO) return;
        const cls = y > MACD_ZERO ? 'candle-down' : 'candle-up';
        html += `<path class="${cls}" d="M${xAt(i)} ${MACD_ZERO} V${y}"/>`;
    });
    document.getElementById('macd-plot').innerHTML = html + macdLines.map(lineMarkup).join('');
}

function drawVolume() {
    let html = '';
    volBars.forEach((y, i) => {
        const cls = candles[i][4] ? 'candle-up' : 'candle-down';
        html += `<rect class="${cls}" x="${xAt(i) - 4}" y="${y}" width="8" height="${VOL_BASE - y}"/>`;
    });
    document.getElementById('vol-plot').innerHTML = html + volLines.map(lineMarkup).join('');
}

drawCandles();
drawMacd();
drawVolume();
```
